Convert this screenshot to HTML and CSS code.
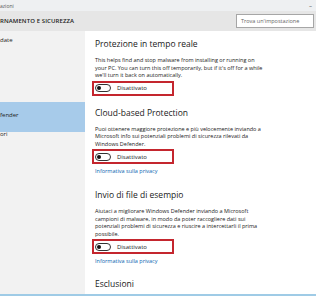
FILE: index.html
```html
<!DOCTYPE html>
<html lang="it">
<head>
    <meta charset="UTF-8">
    <title>Impostazioni - Aggiornamento e sicurezza</title>
    <link rel="stylesheet" href="styles.css">
</head>
<body>
    <div class="titlebar">
        <span class="app-name">azioni</span>
        <span class="win-btn">&ndash;</span>
    </div>

    <header class="header">
        <h1 class="section-name">RNAMENTO E SICUREZZA</h1>
        <div class="search-box">Trova un'impostazione</div>
    </header>

    <div class="main">
        <nav class="sidebar">
            <div class="nav-item first">date</div>
            <div class="nav-item active">fender</div>
            <div class="nav-item next">ori</div>
        </nav>

        <section class="content">
            <h2 class="group-title first">Protezione in tempo reale</h2>
            <p class="group-text">This helps find and stop malware from installing or running on your PC. You can turn this off temporarily, but if it's off for a while we'll turn it back on automatically.</p>
            <div class="toggle-row">
                <span class="toggle"><span class="knob"></span></span>
                <span class="toggle-label">Disattivato</span>
            </div>

            <h2 class="group-title second">Cloud-based Protection</h2>
            <p class="group-text">Puoi ottenere maggiore protezione e più velocemente inviando a Microsoft info sui potenziali problemi di sicurezza rilevati da Windows Defender.</p>
            <div class="toggle-row">
                <span class="toggle"><span class="knob"></span></span>
                <span class="toggle-label">Disattivato</span>
            </div>
            <a class="privacy-link" href="#">Informativa sulla privacy</a>

            <h2 class="group-title third">Invio di file di esempio</h2>
            <p class="group-text">Aiutaci a migliorare Windows Defender inviando a Microsoft campioni di malware, in modo da poter raccogliere dati sui potenziali problemi di sicurezza e riuscire a intercettarli il prima possibile.</p>
            <div class="toggle-row">
                <span class="toggle"><span class="knob"></span></span>
                <span class="toggle-label">Disattivato</span>
            </div>
            <a class="privacy-link" href="#">Informativa sulla privacy</a>

            <h2 class="group-title last">Esclusioni</h2>
        </section>
    </div>

    <div class="taskbar-edge"></div>
</body>
</html>
```

FILE: styles.css
```css
* {
    margin: 0;
    padding: 0;
    box-sizing: border-box;
}

body {
    font-family: 'Open Sans', 'Noto Sans', sans-serif;
    width: 316px;
    height: 296px;
    overflow: hidden;
    display: flex;
    flex-direction: column;
    background: #ffffff;
    color: #1a1a1a;
}

.titlebar {
    height: 11px;
    background: #eef0f2;
    display: flex;
    justify-content: space-between;
    align-items: center;
    padding: 0 4px 0 0;
}

.app-name {
    font-size: 5px;
    color: #555;
}

.win-btn {
    font-size: 6px;
    color: #333;
}

.header {
    height: 20px;
    background: #e6e6e6;
    display: flex;
    justify-content: space-between;
    align-items: center;
    padding-right: 2px;
}

.section-name {
    font-size: 6px;
    font-weight: 600;
    color: #222;
    letter-spacing: 0.1px;
}

.search-box {
    width: 78px;
    height: 14px;
    border: 1px solid #a6a6a6;
    background: #fff;
    font-size: 5.5px;
    color: #666;
    padding-left: 4px;
    line-height: 12px;
}

.main {
    flex: 1;
    display: flex;
    overflow: hidden;
}

.sidebar {
    width: 85px;
    background: #f2f2f2;
    flex-shrink: 0;
}

.nav-item {
    font-size: 6px;
    color: #222;
    line-height: 10px;
}

.nav-item.first {
    margin-top: 4px;
}

.nav-item.active {
    margin-top: 57px;
    height: 30px;
    padding-top: 8px;
    background: #a7cbea;
}

.nav-item.next {
    margin-top: -3px;
}

.content {
    flex: 1;
    padding-left: 10px;
}

.group-title {
    font-size: 8.5px;
    font-weight: 400;
    color: #1a1a1a;
    line-height: 12px;
    margin-bottom: 7px;
}

.group-title.first { margin-top: 7px; }
.group-title.second { margin-top: 11px; }
.group-title.third { margin-top: 14px; }
.group-title.last { margin-top: 13px; }

.group-text {
    font-size: 5.5px;
    line-height: 7.5px;
    color: #222;
    width: 172px;
}

.toggle-row {
    display: flex;
    align-items: center;
    gap: 6px;
    width: 82px;
    height: 15px;
    margin-left: -3px;
    margin-top: 1px;
    padding-left: 1px;
    border: 2px solid #c4262e;
}

.toggle {
    width: 16px;
    height: 8px;
    border: 1px solid #333;
    border-radius: 4px;
    display: flex;
    align-items: center;
    padding-left: 1px;
}

.knob {
    width: 4px;
    height: 4px;
    border-radius: 50%;
    background: #111;
}

.toggle-label {
    font-size: 6px;
    color: #222;
}

.privacy-link {
    display: block;
    font-size: 5.5px;
    line-height: 8px;
    color: #0a64b0;
    text-decoration: none;
    margin-top: 3px;
}

.taskbar-edge {
    height: 2px;
    background: #9fcbe6;
}
```
